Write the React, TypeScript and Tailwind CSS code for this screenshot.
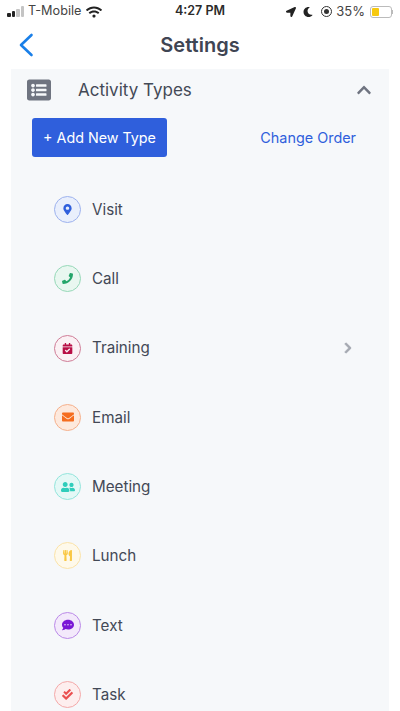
import React from "react";
import {
  FaMapMarkerAlt,
  FaPhoneAlt,
  FaCalendarCheck,
  FaEnvelope,
  FaUserFriends,
  FaUtensils,
  FaCommentDots,
  FaCheckDouble,
  FaListAlt,
  FaChevronUp,
  FaChevronRight,
  FaLocationArrow,
  FaMoon,
  FaWifi,
} from "react-icons/fa";

const rows = [
  { name: "Visit", Icon: FaMapMarkerAlt, cls: "border-[#9db2ee] bg-[#e9effc] text-[#2f5fdc]", size: 11, flip: false },
  { name: "Call", Icon: FaPhoneAlt, cls: "border-[#96d8b8] bg-[#e9f7f0] text-[#25a56a]", size: 11, flip: true },
  { name: "Training", Icon: FaCalendarCheck, cls: "border-[#cf7d97] bg-[#fbf1f4] text-[#b80f45]", size: 11, flip: false },
  { name: "Email", Icon: FaEnvelope, cls: "border-[#f5b08c] bg-[#fde9dd] text-[#f56d1f]", size: 12, flip: false },
  { name: "Meeting", Icon: FaUserFriends, cls: "border-[#93e5dc] bg-[#e4f8f6] text-[#2fcdbb]", size: 14, flip: false },
  { name: "Lunch", Icon: FaUtensils, cls: "border-[#fbe3a8] bg-[#fef9ea] text-[#f9c846]", size: 11, flip: false },
  { name: "Text", Icon: FaCommentDots, cls: "border-[#bb8ae8] bg-[#f3e9fb] text-[#7a18d6]", size: 12, flip: false },
  { name: "Task", Icon: FaCheckDouble, cls: "border-[#f4a9a9] bg-[#fdeeee] text-[#ea4f4f]", size: 11, flip: false },
];

export default function App() {
  return (
    <div className="relative flex h-[711px] w-[400px] flex-col overflow-hidden bg-white font-['Inter',sans-serif] text-[#3f4553]">
      {/* status bar */}
      <div className="flex h-[23px] shrink-0 items-center pl-[7px] pr-[7px] text-[#2b2b2b]">
        <div className="flex w-[140px] items-center">
          <div className="flex items-end gap-[1px]">
            <span className="h-[4px] w-[3.5px] rounded-[1px] bg-[#222]" />
            <span className="h-[6px] w-[3.5px] rounded-[1px] bg-[#222]" />
            <span className="h-[8px] w-[3.5px] rounded-[1px] bg-[#c4c4c4]" />
            <span className="h-[11px] w-[3.5px] rounded-[1px] bg-[#c4c4c4]" />
          </div>
          <span className="ml-[4px] text-[12.7px] leading-none text-[#444]">T-Mobile</span>
          <FaWifi size={16} className="ml-[5px] text-[#222]" />
        </div>
        <div className="ml-[28px] text-[12.5px] font-semibold leading-none">4:27 PM</div>
        <div className="ml-auto flex items-center">
          <FaLocationArrow size={10} className="text-[#222]" />
          <FaMoon size={10} className="ml-[7px] text-[#222]" />
          <span className="ml-[8px] flex h-[11px] w-[11px] items-center justify-center rounded-full border border-[#333]">
            <span className="h-[5px] w-[5px] rounded-full bg-[#333]" />
          </span>
          <span className="ml-[4px] text-[13px] leading-none text-[#444]">35%</span>
          <span className="ml-[5px] flex h-[12px] w-[22px] items-center rounded-[3px] border border-[#bbb] p-[1px]">
            <span className="h-full w-[7px] rounded-[1px] bg-[#f7c90f]" />
          </span>
          <span className="h-[4px] w-[1px] bg-[#bbb]" />
        </div>
      </div>

      {/* nav */}
      <div className="relative flex h-[46px] shrink-0 items-center justify-center pb-[2px]">
        <svg className="absolute left-[18px] top-[10px]" width="16" height="24" viewBox="0 0 16 24" fill="none">
          <path d="M13.5 2 L3 12 L13.5 22" stroke="#1a7fe8" strokeWidth="2.6" strokeLinecap="round" strokeLinejoin="round" />
        </svg>
        <span className="text-[20px] font-semibold leading-none text-[#3f4553]">Settings</span>
      </div>

      {/* panel */}
      <div className="mx-[11px] flex min-h-0 flex-1 flex-col bg-[#f6f8fa]">
        <div className="flex h-[42px] shrink-0 items-center pl-[16px] pr-[17px]">
          <FaListAlt size={24} className="text-[#6f7480]" />
          <span className="ml-[27px] text-[17px] leading-none text-[#434956]">Activity Types</span>
          <FaChevronUp size={16} className="ml-auto text-[#6f7480]" />
        </div>
        <div className="mt-[7px] flex shrink-0 items-center justify-between pl-[21px] pr-[33px]">
          <button className="h-[39px] w-[135px] rounded-[3px] bg-[#2f5fdc] text-[14.3px] text-white">+ Add New Type</button>
          <span className="text-[14.4px] text-[#2f5fdc]">Change Order</span>
        </div>
        <div className="mt-[39px] flex flex-col pl-[43px] pr-[35px]">
          {rows.map(({ name, Icon, cls, size, flip }) => (
            <div key={name} className="mb-[42.3px] flex h-[27px] shrink-0 items-center">
              <span className={`flex h-[27px] w-[27px] items-center justify-center rounded-full border ${cls}`}>
                <Icon size={size} className={flip ? "-scale-x-100" : ""} />
              </span>
              <span className="ml-[11px] text-[15.2px] leading-none text-[#434956]">{name}</span>
              {name === "Training" && (
                <FaChevronRight size={12} className="ml-auto stroke-[#a4a8b0] stroke-[30px] text-[#a4a8b0]" />
              )}
            </div>
          ))}
        </div>
      </div>
    </div>
  );
}
